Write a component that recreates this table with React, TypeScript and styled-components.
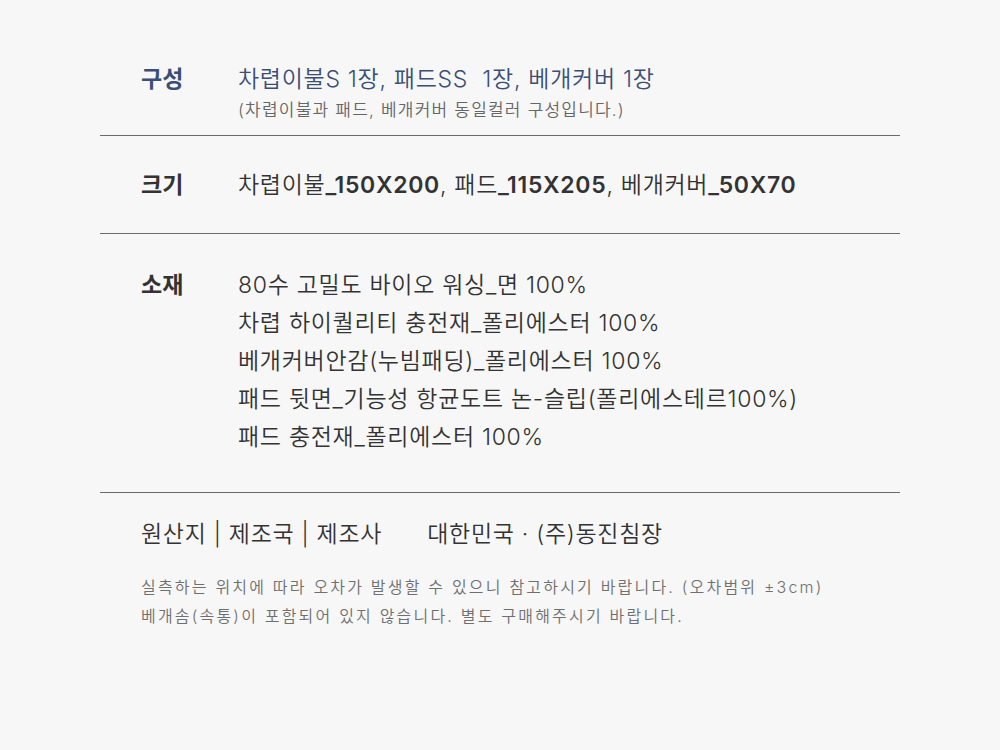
import styled, { createGlobalStyle } from "styled-components";

const GlobalStyle = createGlobalStyle`
  html, body {
    margin: 0;
    padding: 0;
    background: #f7f7f7;
  }
  body {
    font-family: Inter, "Noto Sans CJK KR", sans-serif;
    color: #333;
  }
`;

const Page = styled.div`
  width: 1000px;
  height: 750px;
  background: #f7f7f7;
  padding: 0 100px;
  box-sizing: border-box;
`;

const Section = styled.section<{ top: number; bottom: number; divider?: boolean }>`
  padding: ${({ top }) => top}px 41px ${({ bottom }) => bottom}px;
  border-bottom: ${({ divider }) => (divider ? "1px solid #6b6b6b" : "none")};
`;

const Row = styled.div`
  display: grid;
  grid-template-columns: 97px 1fr;
  align-items: start;
`;

const Label = styled.div<{ accent?: boolean }>`
  font-size: 23px;
  font-weight: 700;
  line-height: 32px;
  color: ${({ accent }) => (accent ? "#3b4f76" : "#333")};
`;

const Value = styled.div<{ accent?: boolean; lh?: number }>`
  font-size: 23px;
  font-weight: 350;
  line-height: ${({ lh }) => lh ?? 32}px;
  letter-spacing: 0.7px;
  color: ${({ accent }) => (accent ? "#3b4f76" : "#333")};
`;

const SubNote = styled.div`
  margin-top: 2px;
  font-size: 17px;
  font-weight: 350;
  line-height: 26px;
  color: #666;
  letter-spacing: 1.2px;
`;

const Strong = styled.span`
  font-weight: 600;
`;

const Origin = styled.div`
  display: flex;
  gap: 45px;
  font-size: 23px;
  font-weight: 350;
  line-height: 32px;
  letter-spacing: 0.7px;
  color: #333;
`;

const Notes = styled.div`
  margin-top: 23px;
  font-size: 16px;
  font-weight: 350;
  line-height: 29px;
  color: #6f6f6f;
  letter-spacing: 2.2px;
`;

const materials = [
  "80수 고밀도 바이오 워싱_면 100%",
  "차렵 하이퀄리티 충전재_폴리에스터 100%",
  "베개커버안감(누빔패딩)_폴리에스터 100%",
  "패드 뒷면_기능성 항균도트 논-슬립(폴리에스테르100%)",
  "패드 충전재_폴리에스터 100%",
];

export default function App() {
  return (
    <>
      <GlobalStyle />
      <Page>
        <Section top={63} bottom={12} divider>
          <Row>
            <Label accent>구성</Label>
            <div>
              <Value accent>차렵이불S 1장, 패드SS&nbsp; 1장, 베개커버 1장</Value>
              <SubNote>(차렵이불과 패드, 베개커버 동일컬러 구성입니다.)</SubNote>
            </div>
          </Row>
        </Section>
        <Section top={33} bottom={32} divider>
          <Row>
            <Label>크기</Label>
            <Value>
              차렵이불<Strong>_150X200</Strong>, 패드<Strong>_115X205</Strong>, 베개커버
              <Strong>_50X70</Strong>
            </Value>
          </Row>
        </Section>
        <Section top={32} bottom={36} divider>
          <Row>
            <Label style={{ marginTop: 3 }}>소재</Label>
            <div>
              {materials.map((m) => (
                <Value key={m} lh={38}>
                  {m}
                </Value>
              ))}
            </div>
          </Row>
        </Section>
        <Section top={25} bottom={0}>
          <Origin>
            <span>원산지 | 제조국 | 제조사</span>
            <span>대한민국 · (주)동진침장</span>
          </Origin>
          <Notes>
            실측하는 위치에 따라 오차가 발생할 수 있으니 참고하시기 바랍니다. (오차범위 ±3cm)
            <br />
            베개솜(속통)이 포함되어 있지 않습니다. 별도 구매해주시기 바랍니다.
          </Notes>
        </Section>
      </Page>
    </>
  );
}
